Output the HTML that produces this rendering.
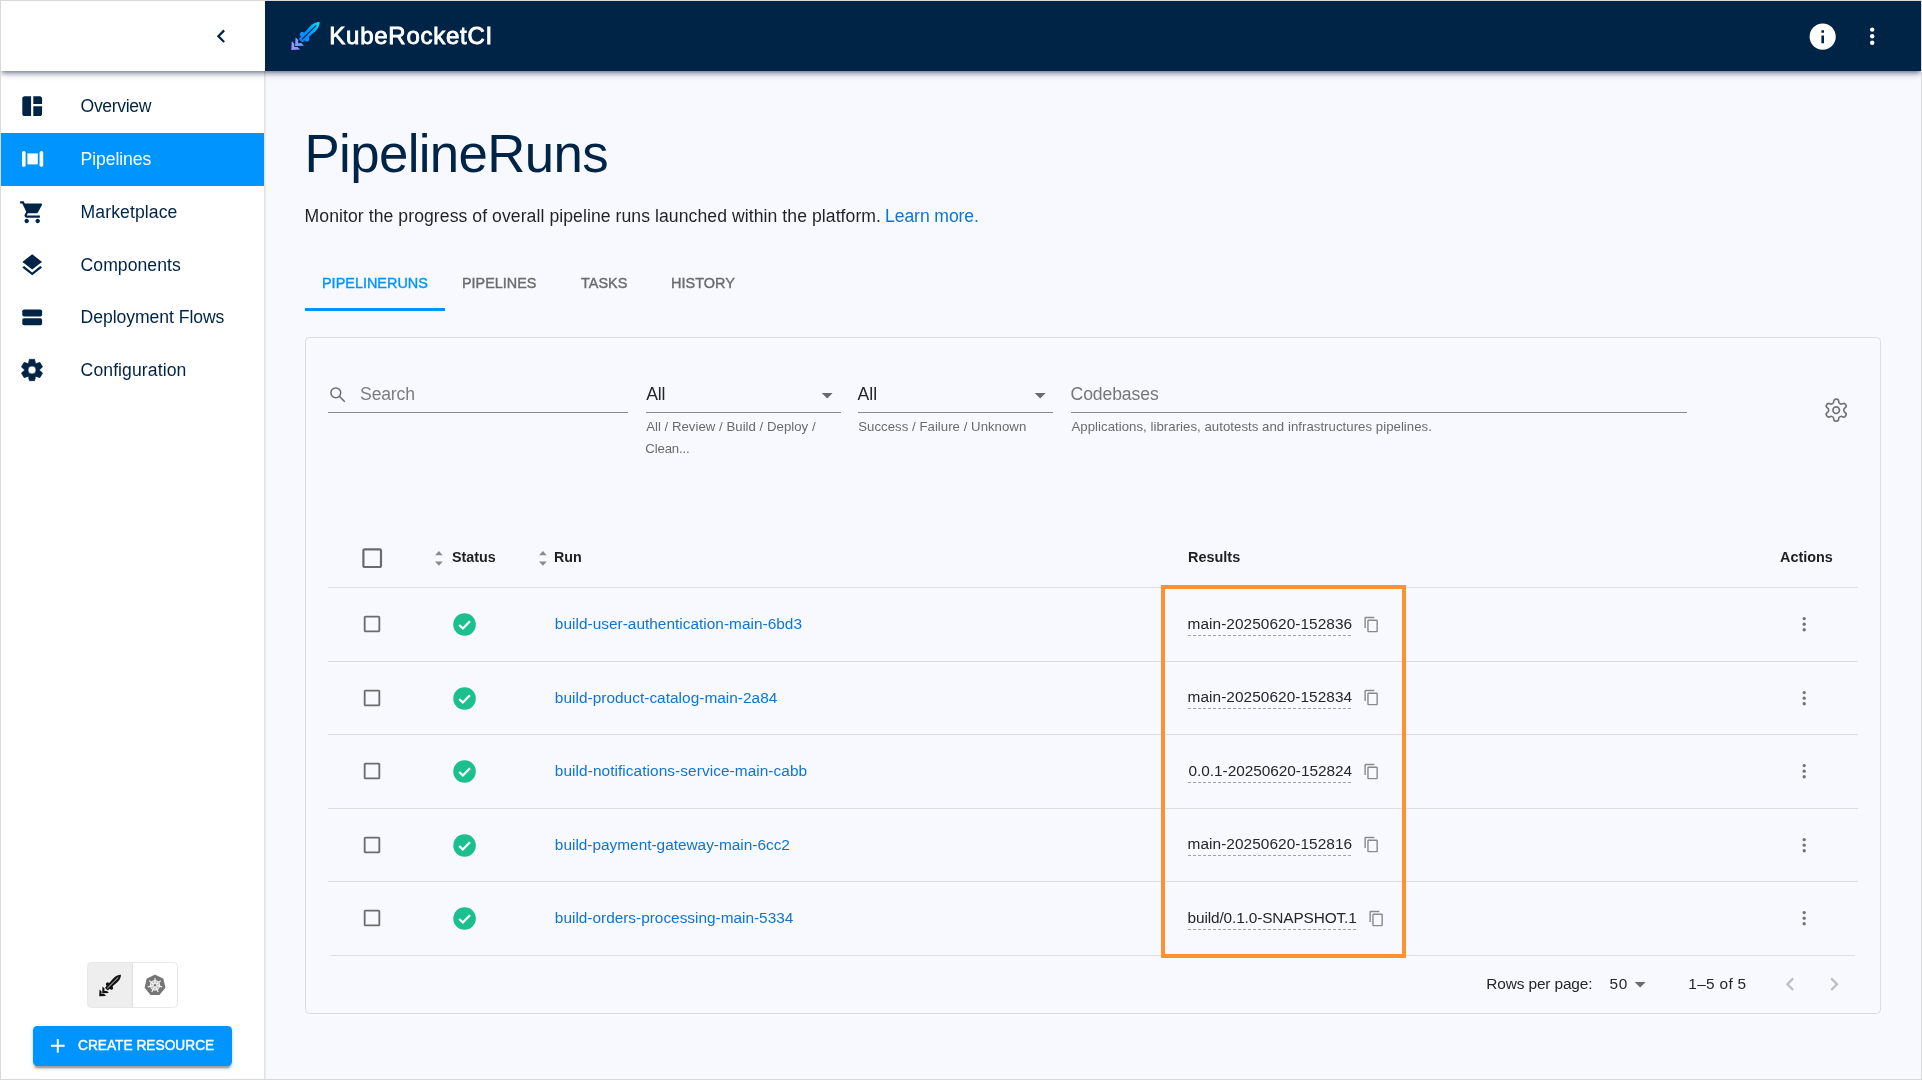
<!DOCTYPE html><html><head><meta charset="utf-8"><title>KubeRocketCI - PipelineRuns</title><style>
html,body{margin:0;padding:0}
body{width:1922px;height:1080px;overflow:hidden;background:#d9d9d9;position:relative;font-family:"Liberation Sans",sans-serif}
.a,.t,.i{position:absolute}
.t{line-height:1;white-space:pre}
#txt{left:0;top:0;width:1922px;height:1080px;will-change:transform}
.i{display:block;overflow:visible}
#app{left:1px;top:1px;width:1920px;height:1078px;background:#f8f9fe;overflow:hidden}
#side{left:1px;top:1px;width:263px;height:1078px;background:#fff;border-right:1px solid #e3e3e4;box-shadow:1px 0 0 #ecedf3}
#bar{left:1px;top:1px;width:1920px;height:70px;background:linear-gradient(to right,#fff 264px,#002446 264px);box-shadow:0 2.2px 4.4px -1.1px rgba(0,22,55,.45),0 4.4px 5.5px 0 rgba(0,22,55,.2),0 1.1px 11px 0 rgba(0,22,55,.12)}
#act{left:1px;top:133px;width:263px;height:53px;background:#0094ff}
.hl{height:1px;background:#dcdde2}
.ul{height:1px;background:#8a8a8e}
.dash{height:1px;background:repeating-linear-gradient(to right,#a3a3a7 0,#a3a3a7 3px,transparent 3px,transparent 5px)}

</style></head><body>
<div class="a" id="app"></div>
<div class="a" id="side"></div>
<div class="a" id="act"></div>
<div class="a" id="bar"></div>
<svg class="i" style="left:291.00px;top:21.00px;width:30.00px;height:30.00px;" viewBox="0 0 30 30" fill="currentColor" ><defs><linearGradient id="g1" x1="1" y1="0" x2="0" y2="0"><stop offset="0" stop-color="#00e5ff"/><stop offset=".55" stop-color="#0094ff"/><stop offset="1" stop-color="#1a7dff"/></linearGradient><linearGradient id="g2" x1="1" y1="0" x2="0" y2="0"><stop offset="0" stop-color="#6fa0ff"/><stop offset="1" stop-color="#a98bff"/></linearGradient></defs><g transform="translate(0.3 28.9) rotate(-44.6)"><path d="M0 0 L6.500 -6 L6.500 -2.200 L4.200 0 L6.500 2.200 L6.500 6Z M5.400 0 L11.900 -6 L11.900 -2.200 L9.600 0 L11.900 2.200 L11.900 6Z" fill="url(#g2)"/><path d="M16.500 -2 C15.800 -5 17.800 -6.300 20.300 -5.400 L21.800 -2.200Z M16.500 2 C15.800 5 17.800 6.300 20.300 5.400 L21.800 2.200Z" fill="#1590ff"/><path d="M13 -2.500 L30 -3.600 C35 -3.600 38.500 -1.600 39.700 0 C38.500 1.600 35 3.600 30 3.600 L13 2.500Z" fill="url(#g1)"/><path d="M15 0 L35 0" stroke="#002446" stroke-width="1.100" fill="none"/></g></svg>
<svg class="i" style="left:208.20px;top:22.90px;width:26.40px;height:26.40px;color:#002446;" viewBox="0 0 24 24" fill="currentColor" ><path d="M15.41 7.41L14 6l-6 6 6 6 1.410-1.410L10.830 12z"/></svg>
<svg class="i" style="left:1806.60px;top:20.60px;width:31.40px;height:31.40px;color:#fff;" viewBox="0 0 24 24" fill="currentColor" ><path d="M12 2C6.480 2 2 6.480 2 12s4.480 10 10 10 10-4.480 10-10S17.520 2 12 2zm1 15h-2v-6h2v6zm0-8h-2V7h2v2z"/></svg>
<svg class="i" style="left:1859.00px;top:23.10px;width:26.40px;height:26.40px;color:#fff;" viewBox="0 0 24 24" fill="currentColor" ><circle cx="12" cy="6" r="2"/><circle cx="12" cy="12" r="2"/><circle cx="12" cy="18" r="2"/></svg>
<svg class="i" style="left:18.70px;top:92.70px;width:26.40px;height:26.40px;color:#002446;" viewBox="0 0 24 24" fill="currentColor" ><path d="M11 21H5c-1.1 0-2-.9-2-2V5c0-1.1.9-2 2-2h6v18zm2 0h6c1.1 0 2-.9 2-2v-7h-8v9zm8-11V5c0-1.1-.9-2-2-2h-6v7h8z"/></svg>
<svg class="i" style="left:21.6px;top:151px;width:21.2px;height:15.8px" viewBox="0 0 21.2 15.8" fill="#fff"><rect x="0" y="0" width="3.6" height="15.8" rx="1.6"/><rect x="17.6" y="0" width="3.6" height="15.8" rx="1.6"/><rect x="5.400" y="2.400" width="10.400" height="11"/></svg>
<svg class="i" style="left:18.90px;top:198.80px;width:26.40px;height:26.40px;color:#002446;" viewBox="0 0 24 24" fill="currentColor" ><path d="M7 18c-1.1 0-1.99.9-1.99 2S5.900 22 7 22s2-.9 2-2-.9-2-2-2zM1 2v2h2l3.600 7.590-1.350 2.450c-.16.28-.25.61-.25.96 0 1.100.9 2 2 2h12v-2H7.420c-.14 0-.25-.11-.25-.25l.03-.12.9-1.630h7.450c.75 0 1.410-.41 1.750-1.030l3.580-6.490c.08-.14.12-.31.12-.48 0-.55-.45-1-1-1H5.210l-.94-2H1zm16 16c-1.100 0-1.990.9-1.990 2s.89 2 1.990 2 2-.9 2-2-.9-2-2-2z"/></svg>
<svg class="i" style="left:19.30px;top:251.50px;width:26.40px;height:26.40px;color:#002446;" viewBox="0 0 24 24" fill="currentColor" ><path d="M11.99 18.54l-7.370-5.730L3 14.070l9 7 9-7-1.630-1.270-7.380 5.740zM12 16l7.360-5.730L21 9l-9-7-9 7 1.630 1.270L12 16z"/></svg>
<svg class="i" style="left:18.90px;top:304.20px;width:26.40px;height:26.40px;color:#002446;" viewBox="0 0 24 24" fill="currentColor" ><rect x="3" y="4.9" width="18" height="6.4" rx="1.6"/><rect x="3" y="12.9" width="18" height="6.4" rx="1.6"/></svg>
<svg class="i" style="left:20.100px;top:358.100px;width:24px;height:24px" viewBox="0 0 24 24" fill="#002446" fill-rule="evenodd" stroke="#002446" stroke-width="0.600" stroke-linejoin="round"><path d="M8.45 5.39L9.35 1.30L14.65 1.30L15.55 5.39A7.50 7.50 0 0 1 15.95 5.62L19.94 4.36L22.59 8.94L19.50 11.77A7.50 7.50 0 0 1 19.50 12.23L22.59 15.06L19.94 19.64L15.95 18.38A7.50 7.50 0 0 1 15.55 18.61L14.65 22.70L9.35 22.70L8.45 18.61A7.50 7.50 0 0 1 8.05 18.38L4.06 19.64L1.41 15.06L4.50 12.23A7.50 7.50 0 0 1 4.50 11.77L1.41 8.94L4.06 4.36L8.05 5.62A7.50 7.50 0 0 1 8.45 5.39ZM12 8A4 4 0 1 0 12 16A4 4 0 1 0 12 8Z"/></svg>
<div class="a" style="left:87px;top:962px;width:90.600px;height:45.700px;box-sizing:border-box;border:1px solid #e8e8ec;border-radius:4.400px;background:linear-gradient(to right,#eeeeee 44px,#dfdfe5 44px,#dfdfe5 45px,#fff 45px)"></div>
<svg class="i" style="left:98.80px;top:973.60px;width:23.00px;height:23.00px;" viewBox="0 0 30 30" fill="currentColor" ><g transform="translate(0.3 28.9) rotate(-44.6)"><path d="M0 0 L6.500 -6 L6.500 -2.200 L4.200 0 L6.500 2.200 L6.500 6Z M5.400 0 L11.900 -6 L11.900 -2.200 L9.600 0 L11.900 2.200 L11.900 6Z" fill="#111"/><path d="M16.500 -2 C15.800 -5 17.800 -6.300 20.300 -5.400 L21.800 -2.200Z M16.500 2 C15.800 5 17.800 6.300 20.300 5.400 L21.800 2.200Z" fill="#111"/><path d="M13 -2.500 L30 -3.600 C35 -3.600 38.500 -1.600 39.700 0 C38.500 1.600 35 3.600 30 3.600 L13 2.500Z" fill="#111"/><path d="M15 0 L35 0" stroke="#eeeeee" stroke-width="1.100" fill="none"/></g></svg>
<svg class="i" style="left:143.80px;top:974.00px;width:22.00px;height:22.00px;" viewBox="0 0 24 24" fill="currentColor" ><polygon points="12.00,1.50 20.44,5.57 22.53,14.70 16.69,22.03 7.31,22.03 1.47,14.70 3.56,5.57" fill="#757575" stroke="#757575" stroke-width="1.500" stroke-linejoin="round"/><g stroke="#f2f2f2" stroke-width="1.300" fill="none"><circle cx="12" cy="12.300" r="5"/><line x1="12" y1="12.300" x2="12.00" y2="4.30"/><line x1="12" y1="12.300" x2="18.25" y2="7.31"/><line x1="12" y1="12.300" x2="19.80" y2="14.08"/><line x1="12" y1="12.300" x2="15.47" y2="19.51"/><line x1="12" y1="12.300" x2="8.53" y2="19.51"/><line x1="12" y1="12.300" x2="4.20" y2="14.08"/><line x1="12" y1="12.300" x2="5.75" y2="7.31"/></g><circle cx="12" cy="12.300" r="4.300" fill="#fff" opacity=".55"/><circle cx="12" cy="12.300" r="1.300" fill="#757575"/></svg>
<div class="a" style="left:33.200px;top:1026.200px;width:198.800px;height:39.400px;background:#0094ff;border-radius:4.400px;box-shadow:0 3.300px 1.100px -2.200px rgba(0,0,0,.2),0 2.200px 2.200px 0 rgba(0,0,0,.14),0 1.100px 5.500px 0 rgba(0,0,0,.12)"></div>
<svg class="i" style="left:46.10px;top:1034.20px;width:23.60px;height:23.60px;color:#fff;" viewBox="0 0 24 24" fill="currentColor" ><path d="M19 13h-6v6h-2v-6H5v-2h6V5h2v6h6v2z"/></svg>
<div class="a" style="left:305px;top:307.600px;width:140px;height:3.300px;background:#0094ff"></div>
<div class="a" style="left:305px;top:337px;width:1575.500px;height:676.500px;box-sizing:border-box;border:1px solid #dcdde3;border-radius:4.400px"></div>
<div class="a ul" style="left:328px;top:412px;width:300px"></div>
<div class="a ul" style="left:646px;top:412px;width:195px"></div>
<div class="a ul" style="left:858px;top:412px;width:195px"></div>
<div class="a ul" style="left:1071px;top:412px;width:616px"></div>
<svg class="i" style="left:326px;top:383px;width:24px;height:24px" viewBox="0 0 24 24" fill="none" stroke="#6b6b6f" stroke-width="1.500" stroke-linecap="butt"><circle cx="9.800" cy="9.800" r="4.900"/><path d="M13.300 13.300L18.800 18.800"/></svg>
<svg class="i" style="left:814.30px;top:382.20px;width:26.40px;height:26.40px;color:#6b6b6f;" viewBox="0 0 24 24" fill="currentColor" ><path d="M7 10l5 5 5-5z"/></svg>
<svg class="i" style="left:1027.00px;top:382.20px;width:26.40px;height:26.40px;color:#6b6b6f;" viewBox="0 0 24 24" fill="currentColor" ><path d="M7 10l5 5 5-5z"/></svg>
<svg class="i" style="left:1822.90px;top:396.80px;width:26.40px;height:26.40px;color:#737377;" viewBox="0 0 24 24" fill="none" stroke="currentColor" stroke-width="1.500" stroke-linecap="round" stroke-linejoin="round"><path d="M12.220 2h-.44a2 2 0 0 0-2 2v.18a2 2 0 0 1-1 1.730l-.43.25a2 2 0 0 1-2 0l-.15-.08a2 2 0 0 0-2.730.73l-.22.38a2 2 0 0 0 .73 2.730l.15.1a2 2 0 0 1 1 1.720v.51a2 2 0 0 1-1 1.740l-.15.09a2 2 0 0 0-.73 2.730l.22.38a2 2 0 0 0 2.730.73l.15-.08a2 2 0 0 1 2 0l.43.25a2 2 0 0 1 1 1.730V20a2 2 0 0 0 2 2h.44a2 2 0 0 0 2-2v-.18a2 2 0 0 1 1-1.730l.43-.25a2 2 0 0 1 2 0l.15.08a2 2 0 0 0 2.730-.73l.22-.39a2 2 0 0 0-.73-2.730l-.15-.08a2 2 0 0 1-1-1.740v-.5a2 2 0 0 1 1-1.740l.15-.09a2 2 0 0 0 .73-2.730l-.22-.38a2 2 0 0 0-2.730-.73l-.15.08a2 2 0 0 1-2 0l-.43-.25a2 2 0 0 1-1-1.730V4a2 2 0 0 0-2-2z"/><circle cx="12" cy="12" r="3"/></svg>
<svg class="i" style="left:359.00px;top:544.80px;width:26.40px;height:26.40px;color:#6b6b6f;" viewBox="0 0 24 24" fill="currentColor" ><path d="M19 5v14H5V5h14m0-2H5c-1.100 0-2 .9-2 2v14c0 1.100.9 2 2 2h14c1.100 0 2-.9 2-2V5c0-1.100-.9-2-2-2z"/></svg>
<svg class="i" style="left:434.90px;top:550.500px;width:7.800px;height:14.700px" viewBox="0 0 7.8 14.7" fill="#8a8a8e"><path d="M0 4.200L3.900 0L7.800 4.200Z M0 10.500L3.900 14.700L7.800 10.500Z"/></svg>
<svg class="i" style="left:538.70px;top:550.500px;width:7.800px;height:14.700px" viewBox="0 0 7.8 14.7" fill="#8a8a8e"><path d="M0 4.200L3.900 0L7.800 4.200Z M0 10.500L3.900 14.700L7.800 10.500Z"/></svg>
<div class="a hl" style="left:328px;top:587px;width:1530px"></div>
<div class="a hl" style="left:328px;top:661px;width:1530px"></div>
<div class="a hl" style="left:328px;top:734px;width:1530px"></div>
<div class="a hl" style="left:328px;top:808px;width:1530px"></div>
<div class="a hl" style="left:328px;top:881px;width:1530px"></div>
<div class="a hl" style="left:331px;top:955px;width:1524px"></div>
<svg class="i" style="left:361.00px;top:613.30px;width:22.00px;height:22.00px;color:#6b6b6f;" viewBox="0 0 24 24" fill="currentColor" ><path d="M19 5v14H5V5h14m0-2H5c-1.100 0-2 .9-2 2v14c0 1.100.9 2 2 2h14c1.100 0 2-.9 2-2V5c0-1.100-.9-2-2-2z"/></svg>
<svg class="i" style="left:451.15px;top:611.25px;width:27.10px;height:27.10px;" viewBox="0 0 24 24" fill="currentColor" ><circle cx="12" cy="12" r="10" fill="#1cbf8e"/><path d="M7.300 12.400L10.500 15.500L16.800 9.100" fill="none" stroke="#fff" stroke-width="2"/></svg>
<div class="a dash" style="left:1188px;top:635px;width:165px"></div>
<svg class="i" style="left:1362.70px;top:615.80px;width:17.00px;height:17.00px;color:#8a8a8e;" viewBox="0 0 24 24" fill="currentColor" ><path d="M16 1H4c-1.100 0-2 .9-2 2v14h2V3h12V1zm3 4H8c-1.100 0-2 .9-2 2v14c0 1.100.9 2 2 2h11c1.100 0 2-.9 2-2V7c0-1.100-.9-2-2-2zm0 16H8V7h11v14z"/></svg>
<svg class="i" style="left:1792.70px;top:613.00px;width:22.40px;height:22.40px;color:#737377;" viewBox="0 0 24 24" fill="currentColor" ><circle cx="12" cy="6" r="1.800"/><circle cx="12" cy="12" r="1.800"/><circle cx="12" cy="18" r="1.800"/></svg>
<svg class="i" style="left:361.00px;top:686.80px;width:22.00px;height:22.00px;color:#6b6b6f;" viewBox="0 0 24 24" fill="currentColor" ><path d="M19 5v14H5V5h14m0-2H5c-1.100 0-2 .9-2 2v14c0 1.100.9 2 2 2h14c1.100 0 2-.9 2-2V5c0-1.100-.9-2-2-2z"/></svg>
<svg class="i" style="left:451.15px;top:684.75px;width:27.10px;height:27.10px;" viewBox="0 0 24 24" fill="currentColor" ><circle cx="12" cy="12" r="10" fill="#1cbf8e"/><path d="M7.300 12.400L10.500 15.500L16.800 9.100" fill="none" stroke="#fff" stroke-width="2"/></svg>
<div class="a dash" style="left:1188px;top:708px;width:165px"></div>
<svg class="i" style="left:1362.70px;top:689.30px;width:17.00px;height:17.00px;color:#8a8a8e;" viewBox="0 0 24 24" fill="currentColor" ><path d="M16 1H4c-1.100 0-2 .9-2 2v14h2V3h12V1zm3 4H8c-1.100 0-2 .9-2 2v14c0 1.100.9 2 2 2h11c1.100 0 2-.9 2-2V7c0-1.100-.9-2-2-2zm0 16H8V7h11v14z"/></svg>
<svg class="i" style="left:1792.70px;top:686.50px;width:22.40px;height:22.40px;color:#737377;" viewBox="0 0 24 24" fill="currentColor" ><circle cx="12" cy="6" r="1.800"/><circle cx="12" cy="12" r="1.800"/><circle cx="12" cy="18" r="1.800"/></svg>
<svg class="i" style="left:361.00px;top:760.30px;width:22.00px;height:22.00px;color:#6b6b6f;" viewBox="0 0 24 24" fill="currentColor" ><path d="M19 5v14H5V5h14m0-2H5c-1.100 0-2 .9-2 2v14c0 1.100.9 2 2 2h14c1.100 0 2-.9 2-2V5c0-1.100-.9-2-2-2z"/></svg>
<svg class="i" style="left:451.15px;top:758.25px;width:27.10px;height:27.10px;" viewBox="0 0 24 24" fill="currentColor" ><circle cx="12" cy="12" r="10" fill="#1cbf8e"/><path d="M7.300 12.400L10.500 15.500L16.800 9.100" fill="none" stroke="#fff" stroke-width="2"/></svg>
<div class="a dash" style="left:1188px;top:782px;width:165px"></div>
<svg class="i" style="left:1362.70px;top:762.80px;width:17.00px;height:17.00px;color:#8a8a8e;" viewBox="0 0 24 24" fill="currentColor" ><path d="M16 1H4c-1.100 0-2 .9-2 2v14h2V3h12V1zm3 4H8c-1.100 0-2 .9-2 2v14c0 1.100.9 2 2 2h11c1.100 0 2-.9 2-2V7c0-1.100-.9-2-2-2zm0 16H8V7h11v14z"/></svg>
<svg class="i" style="left:1792.70px;top:760.00px;width:22.40px;height:22.40px;color:#737377;" viewBox="0 0 24 24" fill="currentColor" ><circle cx="12" cy="6" r="1.800"/><circle cx="12" cy="12" r="1.800"/><circle cx="12" cy="18" r="1.800"/></svg>
<svg class="i" style="left:361.00px;top:833.80px;width:22.00px;height:22.00px;color:#6b6b6f;" viewBox="0 0 24 24" fill="currentColor" ><path d="M19 5v14H5V5h14m0-2H5c-1.100 0-2 .9-2 2v14c0 1.100.9 2 2 2h14c1.100 0 2-.9 2-2V5c0-1.100-.9-2-2-2z"/></svg>
<svg class="i" style="left:451.15px;top:831.75px;width:27.10px;height:27.10px;" viewBox="0 0 24 24" fill="currentColor" ><circle cx="12" cy="12" r="10" fill="#1cbf8e"/><path d="M7.300 12.400L10.500 15.500L16.800 9.100" fill="none" stroke="#fff" stroke-width="2"/></svg>
<div class="a dash" style="left:1188px;top:855px;width:165px"></div>
<svg class="i" style="left:1362.70px;top:836.30px;width:17.00px;height:17.00px;color:#8a8a8e;" viewBox="0 0 24 24" fill="currentColor" ><path d="M16 1H4c-1.100 0-2 .9-2 2v14h2V3h12V1zm3 4H8c-1.100 0-2 .9-2 2v14c0 1.100.9 2 2 2h11c1.100 0 2-.9 2-2V7c0-1.100-.9-2-2-2zm0 16H8V7h11v14z"/></svg>
<svg class="i" style="left:1792.70px;top:833.50px;width:22.40px;height:22.40px;color:#737377;" viewBox="0 0 24 24" fill="currentColor" ><circle cx="12" cy="6" r="1.800"/><circle cx="12" cy="12" r="1.800"/><circle cx="12" cy="18" r="1.800"/></svg>
<svg class="i" style="left:361.00px;top:907.30px;width:22.00px;height:22.00px;color:#6b6b6f;" viewBox="0 0 24 24" fill="currentColor" ><path d="M19 5v14H5V5h14m0-2H5c-1.100 0-2 .9-2 2v14c0 1.100.9 2 2 2h14c1.100 0 2-.9 2-2V5c0-1.100-.9-2-2-2z"/></svg>
<svg class="i" style="left:451.15px;top:905.25px;width:27.10px;height:27.10px;" viewBox="0 0 24 24" fill="currentColor" ><circle cx="12" cy="12" r="10" fill="#1cbf8e"/><path d="M7.300 12.400L10.500 15.500L16.800 9.100" fill="none" stroke="#fff" stroke-width="2"/></svg>
<div class="a dash" style="left:1188px;top:929px;width:170px"></div>
<svg class="i" style="left:1367.50px;top:909.80px;width:17.00px;height:17.00px;color:#8a8a8e;" viewBox="0 0 24 24" fill="currentColor" ><path d="M16 1H4c-1.100 0-2 .9-2 2v14h2V3h12V1zm3 4H8c-1.100 0-2 .9-2 2v14c0 1.100.9 2 2 2h11c1.100 0 2-.9 2-2V7c0-1.100-.9-2-2-2zm0 16H8V7h11v14z"/></svg>
<svg class="i" style="left:1792.70px;top:907.00px;width:22.40px;height:22.40px;color:#737377;" viewBox="0 0 24 24" fill="currentColor" ><circle cx="12" cy="6" r="1.800"/><circle cx="12" cy="12" r="1.800"/><circle cx="12" cy="18" r="1.800"/></svg>
<div class="a" style="left:1161px;top:585px;width:245px;height:373px;box-sizing:border-box;border:4px solid #ff9130"></div>
<svg class="i" style="left:1627.20px;top:971.30px;width:26.40px;height:26.40px;color:#6b6b6f;" viewBox="0 0 24 24" fill="currentColor" ><path d="M7 10l5 5 5-5z"/></svg>
<svg class="i" style="left:1777.13px;top:970.80px;width:26.40px;height:26.40px;color:#bdbdc1;" viewBox="0 0 24 24" fill="currentColor" ><path d="M15.41 7.41L14 6l-6 6 6 6 1.410-1.410L10.830 12z"/></svg>
<svg class="i" style="left:1820.87px;top:970.80px;width:26.40px;height:26.40px;color:#bdbdc1;" viewBox="0 0 24 24" fill="currentColor" ><path d="M10 6L8.590 7.410 13.170 12l-4.580 4.590L10 18l6-6z"/></svg>
<div class="a" id="txt">
<span class="t" style="left:329.34px;top:24.00px;font-size:24.0px;letter-spacing:0.736px;-webkit-text-stroke:0.85px #ffffff;color:#ffffff">KubeRocketCI</span>
<span class="t" style="left:80.60px;top:98.00px;font-size:17.6px;letter-spacing:-0.360px;color:#002446">Overview</span>
<span class="t" style="left:80.60px;top:151.00px;font-size:17.6px;letter-spacing:-0.090px;color:#ffffff">Pipelines</span>
<span class="t" style="left:80.60px;top:204.00px;font-size:17.6px;letter-spacing:0.090px;color:#002446">Marketplace</span>
<span class="t" style="left:80.60px;top:257.00px;font-size:17.6px;letter-spacing:0.040px;color:#002446">Components</span>
<span class="t" style="left:80.60px;top:309.00px;font-size:17.6px;letter-spacing:-0.060px;color:#002446">Deployment Flows</span>
<span class="t" style="left:80.60px;top:362.00px;font-size:17.6px;letter-spacing:0.090px;color:#002446">Configuration</span>
<span class="t" style="left:78.00px;top:1037.00px;font-size:15.4px;transform-origin:0 0;transform:scaleX(0.8915);-webkit-text-stroke:0.45px #ffffff;color:#ffffff">CREATE RESOURCE</span>
<span class="t" style="left:304.52px;top:128.00px;font-size:52.8px;letter-spacing:-0.638px;color:#002446">PipelineRuns</span>
<span class="t" style="left:304.60px;top:208.00px;font-size:17.6px;letter-spacing:0.071px;color:#1f2328">Monitor the progress of overall pipeline runs launched within the platform.</span>
<span class="t" style="left:885.10px;top:208.00px;font-size:17.6px;letter-spacing:-0.108px;color:#0f74d2">Learn more.</span>
<span class="t" style="left:321.60px;top:275.00px;font-size:15.4px;transform-origin:0 0;transform:scaleX(0.9375);-webkit-text-stroke:0.4px #0094ff;color:#0094ff">PIPELINERUNS</span>
<span class="t" style="left:462.10px;top:275.00px;font-size:15.4px;transform-origin:0 0;transform:scaleX(0.9360);-webkit-text-stroke:0.4px #6b6b6e;color:#6b6b6e">PIPELINES</span>
<span class="t" style="left:581.00px;top:275.00px;font-size:15.4px;transform-origin:0 0;transform:scaleX(0.9391);-webkit-text-stroke:0.4px #6b6b6e;color:#6b6b6e">TASKS</span>
<span class="t" style="left:671.10px;top:275.00px;font-size:15.4px;transform-origin:0 0;transform:scaleX(0.9405);-webkit-text-stroke:0.4px #6b6b6e;color:#6b6b6e">HISTORY</span>
<span class="t" style="left:360.10px;top:386.00px;font-size:17.6px;letter-spacing:-0.180px;color:#7d7d81">Search</span>
<span class="t" style="left:646.14px;top:386.00px;font-size:17.6px;letter-spacing:-0.090px;color:#26262a">All</span>
<span class="t" style="left:857.62px;top:386.00px;font-size:17.6px;color:#26262a">All</span>
<span class="t" style="left:1070.60px;top:386.00px;font-size:17.6px;letter-spacing:-0.113px;color:#77777a">Codebases</span>
<span class="t" style="left:646.14px;top:420.00px;font-size:13.2px;letter-spacing:0.030px;color:#6b6b6e">All / Review / Build / Deploy /</span>
<span class="t" style="left:645.24px;top:442.00px;font-size:13.2px;letter-spacing:-0.129px;color:#6b6b6e">Clean...</span>
<span class="t" style="left:858.24px;top:420.00px;font-size:13.2px;letter-spacing:0.035px;color:#6b6b6e">Success / Failure / Unknown</span>
<span class="t" style="left:1071.50px;top:420.00px;font-size:13.2px;letter-spacing:0.042px;color:#6b6b6e">Applications, libraries, autotests and infrastructures pipelines.</span>
<span class="t" style="left:451.76px;top:549.00px;font-size:15.4px;font-weight:700;transform-origin:0 0;transform:scaleX(0.9312);color:#1f1f22">Status</span>
<span class="t" style="left:554.10px;top:549.00px;font-size:15.4px;font-weight:700;transform-origin:0 0;transform:scaleX(0.9286);color:#1f1f22">Run</span>
<span class="t" style="left:1187.60px;top:549.00px;font-size:15.4px;font-weight:700;transform-origin:0 0;transform:scaleX(0.9386);color:#1f1f22">Results</span>
<span class="t" style="left:1779.88px;top:549.00px;font-size:15.4px;font-weight:700;transform-origin:0 0;transform:scaleX(0.9358);color:#1f1f22">Actions</span>
<span class="t" style="left:1486.34px;top:976.00px;font-size:15.4px;letter-spacing:-0.125px;color:#26262a">Rows per page:</span>
<span class="t" style="left:1609.60px;top:976.00px;font-size:15.4px;letter-spacing:0.540px;color:#26262a">50</span>
<span class="t" style="left:1688.34px;top:976.00px;font-size:15.4px;letter-spacing:0.309px;color:#26262a">1–5 of 5</span>
<span class="t" style="left:554.86px;top:616.00px;font-size:15.4px;letter-spacing:0.021px;color:#0f74d2">build-user-authentication-main-6bd3</span>
<span class="t" style="left:1187.60px;top:616.00px;font-size:15.4px;letter-spacing:0.057px;color:#26262a">main-20250620-152836</span>
<span class="t" style="left:554.86px;top:690.00px;font-size:15.4px;letter-spacing:0.030px;color:#0f74d2">build-product-catalog-main-2a84</span>
<span class="t" style="left:1187.60px;top:689.00px;font-size:15.4px;letter-spacing:0.057px;color:#26262a">main-20250620-152834</span>
<span class="t" style="left:554.86px;top:763.00px;font-size:15.4px;letter-spacing:0.070px;color:#0f74d2">build-notifications-service-main-cabb</span>
<span class="t" style="left:1188.50px;top:763.00px;font-size:15.4px;letter-spacing:-0.036px;color:#26262a">0.0.1-20250620-152824</span>
<span class="t" style="left:554.86px;top:837.00px;font-size:15.4px;letter-spacing:-0.006px;color:#0f74d2">build-payment-gateway-main-6cc2</span>
<span class="t" style="left:1187.60px;top:836.00px;font-size:15.4px;letter-spacing:0.057px;color:#26262a">main-20250620-152816</span>
<span class="t" style="left:554.86px;top:910.00px;font-size:15.4px;letter-spacing:-0.006px;color:#0f74d2">build-orders-processing-main-5334</span>
<span class="t" style="left:1187.60px;top:910.00px;font-size:15.4px;letter-spacing:-0.129px;color:#26262a">build/0.1.0-SNAPSHOT.1</span>
</div>
<div class="a" style="left:0;top:0;width:1922px;height:1080px;box-sizing:border-box;border:1px solid #d9d9d9;pointer-events:none"></div>
</body></html>
